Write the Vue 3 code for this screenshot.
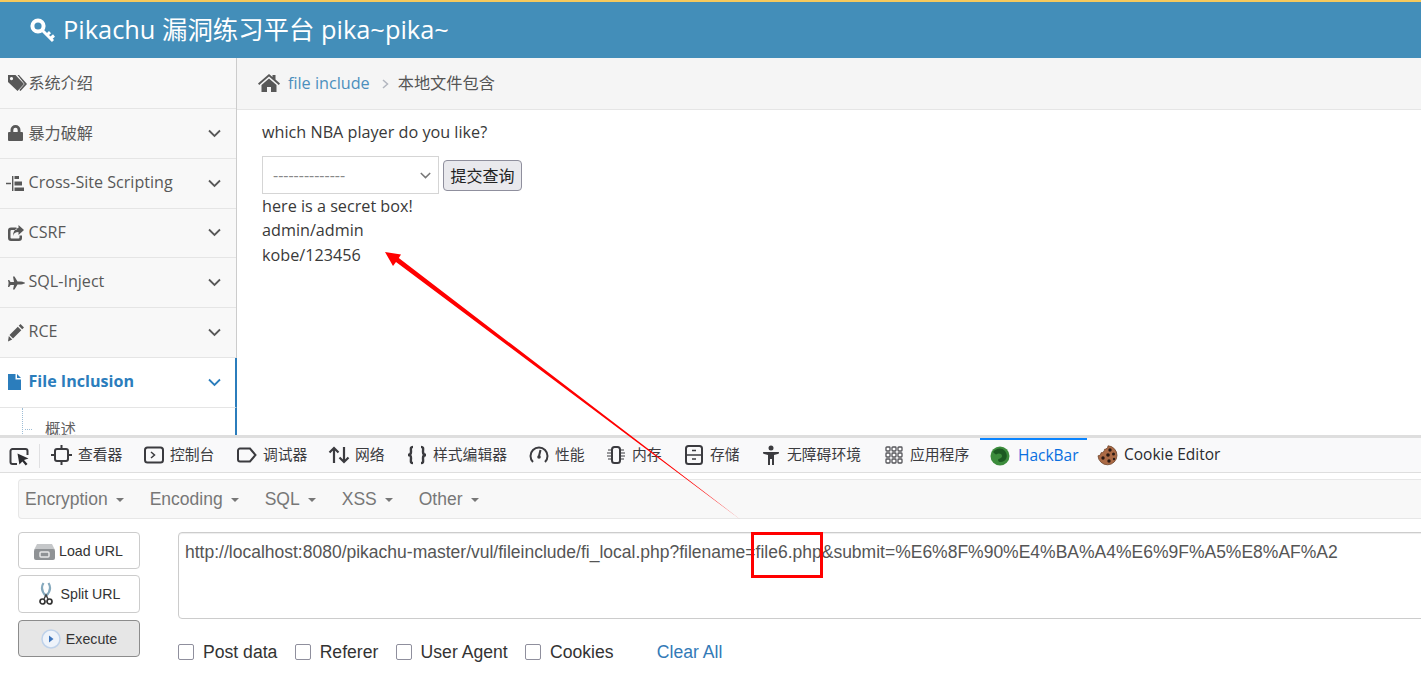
<script setup>
const chevron = 'M1 1.5 L6.5 7 L12 1.5'
const menu = [
  { label: '系统介绍', icon: 'M0 0h7.500L16 9l-6.500 7L0 7zM3.500 2a1.600 1.600 0 1 0 .01 0zM9.500 0h1.500l8 9-6.500 7-1.200-1 5.300-6z', w: 19, arrow: false },
  { label: '暴力破解', icon: 'M2.500 7V5a5 5 0 0 1 10 0V7H14a1 1 0 0 1 1 1v7a1 1 0 0 1-1 1H1a1 1 0 0 1-1-1V8a1 1 0 0 1 1-1zM5.300 7h4.400V5a2.200 2.200 0 0 0-4.400 0z', w: 15, arrow: true },
  { label: 'Cross-Site Scripting', icon: 'M-2 7.800h5v1.400h-5zM4 1h1.400v15H4zM6.500 1H11v3H6.500zM6.500 6.500H14v4H6.500zM6.500 12.500H16V16H6.500z', w: 17, arrow: true },
  { label: 'CSRF', icon: 'M3 2.500h5.500v2.500H3.500a1 1 0 0 0-1 1v6.500a1 1 0 0 0 1 1h7a1 1 0 0 0 1-1V10.500H14V13a3 3 0 0 1-3 3H3a3 3 0 0 1-3-3V5.500a3 3 0 0 1 3-3zM10.500 0L16 5l-5.500 5V7c-3 0-5 1.500-5.500 4C5 6.500 7.500 3.500 10.500 3z', w: 16, arrow: true },
  { label: 'SQL-Inject', icon: 'M0 5h1.200l1.300 2H6L5 1.500h1.500L9.500 6.500H13c2 .3 4 1 4 1.500s-2 1.200-4 1.500H9.500L6.500 14.500H5L6 10H2.500L1.200 12H0l.6-4z', w: 17, arrow: true },
  { label: 'RCE', icon: 'M12.500-1l3.500 3.500-1.800 1.800-3.500-3.500zM9.800 1.700l3.500 3.500-8.300 8.300-3.500-3.500zM.8 11l3.400 3.400L0 16.500z', w: 16, arrow: true },
  { label: 'File Inclusion', icon: 'M0 0h7.500v5.500H13V16H0zM9 0l4 4H9z', w: 13, arrow: true, active: true }
]
const tools = [
  { label: '查看器', w: 92 },
  { label: '控制台', w: 93 },
  { label: '调试器', w: 92 },
  { label: '网络', w: 78 },
  { label: '样式编辑器', w: 122 },
  { label: '性能', w: 77 },
  { label: '内存', w: 78 },
  { label: '存储', w: 77 },
  { label: '无障碍环境', w: 123 },
  { label: '应用程序', w: 97 }
]
const bars = ['Encryption', 'Encoding', 'SQL', 'XSS', 'Other']
const checks = ['Post data', 'Referer', 'User Agent', 'Cookies']
</script>

<template>
  <div class="page">
    <header class="top">
      <svg class="key" width="26" height="25" viewBox="0 0 26 25">
        <circle cx="8" cy="8" r="5.600" fill="none" stroke="#fff" stroke-width="4" />
        <path d="M11.500 11.500L23 23M17 17l3-2.800M20.500 20.500l3.500-3" fill="none" stroke="#fff" stroke-width="3" />
      </svg>
      <span class="brand">Pikachu 漏洞练习平台 pika~pika~</span>
    </header>

    <div class="middle">
      <aside class="side">
        <div v-for="item in menu" :key="item.label" class="row" :class="{ on: item.active }">
          <span class="ico">
            <svg :width="item.w" height="16" :viewBox="`0 0 ${item.w} 16`"><path :d="item.icon" fill-rule="evenodd" fill="currentColor" /></svg>
          </span>
          <span class="lab">{{ item.label }}</span>
          <svg v-if="item.arrow" class="chev" width="13" height="9" viewBox="0 0 13 9"><path :d="chevron" fill="none" stroke="currentColor" stroke-width="1.800" /></svg>
        </div>
        <div class="sub">
          <span class="dots"></span>
          <span class="dash"></span>
          <span class="subt">概述</span>
        </div>
      </aside>

      <main class="main">
        <div class="crumb">
          <svg width="22" height="18" viewBox="0 0 22 18"><path d="M0 9.500L11 0l3.500 3V1h3v4.600L22 9.500l-1.200 1.400L11 2.500 1.200 10.900zM3.500 11L11 4.500 18.500 11v7h-5.500v-5H9v5H3.500z" fill="#585858" /></svg>
          <a class="link">file include</a>
          <svg class="sep" width="7" height="10" viewBox="0 0 7 10"><path d="M1 1l4.500 4L1 9" fill="none" stroke="#b2b6bf" stroke-width="1.500" /></svg>
          <span class="here">本地文件包含</span>
        </div>
        <div class="body">
          <p class="ask">which NBA player do you like?</p>
          <div class="form">
            <div class="sel">
              <span>--------------</span>
              <svg width="11" height="7" viewBox="0 0 11 7"><path d="M.8 1l4.700 4.600L10.200 1" fill="none" stroke="#777" stroke-width="1.500" /></svg>
            </div>
            <button class="go">提交查询</button>
          </div>
          <p class="line">here is a secret box!</p>
          <p class="line">admin/admin</p>
          <p class="line">kobe/123456</p>
        </div>
      </main>
    </div>

    <section class="dev">
      <div class="tabs">
        <span class="pick">
          <svg width="21" height="19" viewBox="0 0 21 19">
            <path d="M8 17H3.500A2 2 0 0 1 1.500 15V4A2 2 0 0 1 3.500 2h13a2 2 0 0 1 2 2v4" fill="none" stroke="#3b3b3f" stroke-width="2" />
            <path d="M8.500 6.500l11 5-4.500 1.500 3.500 4-1.800 1.500-3.300-4-3 3z" fill="#2b2b2f" />
          </svg>
        </span>
        <span class="vr"></span>
        <div v-for="(t, i) in tools" :key="t.label" class="tool" :style="{ width: t.w + 'px' }">
          <svg width="22" height="20" viewBox="0 0 22 20" fill="none" stroke="#3b3b3f" stroke-width="2">
            <g v-if="i === 0"><rect x="4" y="4" width="13" height="12" rx="2" /><path d="M10.500 0v4M10.500 16v4M0 10h4M17 10h4" /></g>
            <g v-else-if="i === 1"><rect x="2" y="2.500" width="18" height="15" rx="2.500" /><path d="M8 7l3.500 3L8 13" stroke-width="1.500" /></g>
            <path v-else-if="i === 2" d="M4 3.500h10l5.500 6.500-5.500 6.500H4a2 2 0 0 1-2-2v-9a2 2 0 0 1 2-2z" />
            <g v-else-if="i === 3" stroke-width="2.200"><path d="M6 18V3M1.500 7.500L6 3l4.500 4.500M16 2v15M11.500 12.500L16 17l4.500-4.500" /></g>
            <g v-else-if="i === 4" stroke-width="2.400"><path d="M7 2C4 2 5 4 5 7c0 2-1 3-3 3 2 0 3 1 3 3 0 3-1 5 2 5M15 2c3 0 2 2 2 5 0 2 1 3 3 3-2 0-3 1-3 3 0 3 1 5-2 5" /></g>
            <g v-else-if="i === 5"><path d="M5 17A8.500 8.500 0 1 1 17 17" /><path d="M11 11l1.500-6" /><circle cx="11" cy="12" r="1.800" fill="#3b3b3f" stroke="none" /></g>
            <g v-else-if="i === 6" stroke-width="1.600"><rect x="7" y="2" width="8" height="16" rx="2.500" stroke-width="2" /><path d="M3 5h4M2 8h5M2 11h5M3 14h4M15 5h4M15 8h5M15 11h5M15 14h4" stroke-width="1.200" /></g>
            <g v-else-if="i === 7"><rect x="3" y="1" width="16" height="18" rx="2.500" /><path d="M3 10h16M9 5.500h4M9 14h4" stroke-width="1.500" /></g>
            <g v-else-if="i === 8"><circle cx="11" cy="3" r="2.500" fill="#3b3b3f" stroke="none" /><path d="M3 7h16l-.3 1.800L14 10v10h-2v-6h-2v6H8V10L3.300 8.800z" fill="#3b3b3f" stroke="none" /></g>
            <g v-else fill="#fff" stroke="#55555a" stroke-width="1.300"><rect x="3" y="2" width="4" height="4" rx=".8" /><rect x="9" y="2" width="4" height="4" rx=".8" /><rect x="15" y="2" width="4" height="4" rx=".8" /><rect x="3" y="8" width="4" height="4" rx=".8" /><rect x="9" y="8" width="4" height="4" rx=".8" /><rect x="15" y="8" width="4" height="4" rx=".8" /><rect x="3" y="14" width="4" height="4" rx=".8" /><rect x="9" y="14" width="4" height="4" rx=".8" /><rect x="15" y="14" width="4" height="4" rx=".8" /></g>
          </svg>
          <span class="tl">{{ t.label }}</span>
        </div>
        <div class="tool hack">
          <svg width="20" height="20" viewBox="0 0 20 20"><circle cx="10" cy="10" r="9.500" fill="#3c8c3c" /><path d="M3 6c3-4 9-5 12-1s2 8-1 10-6 1-6-1 4-1 4-4-4-3-5-2-2 0-4-2z" fill="#1c5a22" /></svg>
          <span>HackBar</span>
        </div>
        <div class="tool cookie">
          <svg width="21" height="21" viewBox="0 0 21 21"><path d="M11 .8a9.500 9.500 0 1 1-10 10c1.500 0 3-1 3-3 2 0 3.500-1.500 3.500-3.500 2 0 3.500-1.500 3.500-3.500z" fill="#ab6a45" stroke="#6d452c" stroke-width=".8" /><circle cx="13" cy="5" r="1.700" fill="#2b1a14" /><circle cx="16.500" cy="9" r="1.500" fill="#2b1a14" /><circle cx="11" cy="10" r="1.800" fill="#2b1a14" /><circle cx="6" cy="13" r="1.700" fill="#2b1a14" /><circle cx="12" cy="16" r="1.700" fill="#2b1a14" /><circle cx="17" cy="14" r="1.200" fill="#2b1a14" /></svg>
          <span>Cookie Editor</span>
        </div>
      </div>

      <div class="nav">
        <span v-for="b in bars" :key="b" class="drop">{{ b }}<i class="caret"></i></span>
      </div>

      <div class="work">
        <div class="btns">
          <button class="bt load">
            <svg width="23" height="20" viewBox="0 0 23 20"><path d="M4 3h15l3 6H1z" fill="#c5c7c9" /><rect x="1" y="8" width="21" height="11" rx="2" fill="#8f9295" /><rect x="7" y="11" width="9" height="5" rx="1" fill="none" stroke="#e8e8e8" stroke-width="1.500" /></svg>
            Load URL
          </button>
          <button class="bt split">
            <svg width="14" height="24" viewBox="0 0 14 24"><path d="M4.500 1C2 5 3 10 7 14M9.500 1C12 5 11 10 7 14" fill="none" stroke="#85a9bd" stroke-width="2.200" /><circle cx="3.500" cy="19.500" r="2.500" fill="none" stroke="#333" stroke-width="1.700" /><circle cx="10.500" cy="19.500" r="2.500" fill="none" stroke="#333" stroke-width="1.700" /><path d="M5 17l2-4 2 4" fill="none" stroke="#444" stroke-width="1.500" /></svg>
            Split URL
          </button>
          <button class="bt exec">
            <svg width="20" height="20" viewBox="0 0 20 20"><circle cx="10" cy="10" r="9" fill="#eef3fa" stroke="#bfd2ea" stroke-width="1.500" /><path d="M8 6.500l4.500 3.500L8 13.500z" fill="#3f76bd" /></svg>
            Execute
          </button>
        </div>
        <div class="right">
          <div class="url">http://localhost:8080/pikachu-master/vul/fileinclude/fi_local.php?filename=file6.php&amp;submit=%E6%8F%90%E4%BA%A4%E6%9F%A5%E8%AF%A2</div>
          <div class="opts">
            <label v-for="c in checks" :key="c" class="chk"><span class="box"></span>{{ c }}</label>
            <a class="clear">Clear All</a>
          </div>
        </div>
      </div>
    </section>

    <svg class="mark" width="1421" height="697" viewBox="0 0 1421 697">
      <path d="M385 252L401 254.500 398.800 258 741 520 396 262 393 266z" fill="#f00" />
    </svg>
    <div class="redbox"></div>
  </div>
</template>

<style>
html, body { margin: 0; padding: 0; background: #fff; overflow: hidden; }
</style>

<style scoped>
.page {
  position: relative;
  width: 1421px;
  height: 697px;
  overflow: hidden;
  display: flex;
  flex-direction: column;
  font-family: "Open Sans", "Noto Sans CJK SC", sans-serif;
  color: #393939;
}
.top {
  flex: none;
  height: 56px;
  border-top: 2px solid #f6c95c;
  background: #438eb9;
  display: flex;
  align-items: center;
  padding-left: 30px;
  color: #fff;
}
.key { margin-right: 7px; margin-top: 1px; }
.brand { font-size: 25.400px; position: relative; top: -2px; }
.middle { flex: none; height: 377px; display: flex; overflow: hidden; }
.side {
  flex: none;
  width: 236px;
  border-right: 1px solid #ccc;
  background: #f8f8f8;
  display: flex;
  flex-direction: column;
}
.row {
  flex: none;
  height: 49.85px;
  box-sizing: border-box;
  border-bottom: 1px solid #e5e5e5;
  display: flex;
  align-items: center;
  padding-left: 8px;
  color: #585858;
  font-size: 16.100px;
}
.row:first-child { height: 50.85px; }
.ico { display: flex; flex: none; width: 20.500px; }
.ico svg { overflow: visible; }
.lab { flex: 1; position: relative; top: -1.400px; }
.chev { margin-right: 15px; color: #585858; }
.row.on { background: #fff; color: #2b7dbc; font-weight: 700; margin-right: -1px; border-right: 2px solid #2b7dbc; }
.row.on .chev { color: #2b7dbc; margin-right: 14px; }
.sub { flex: 1; position: relative; background: #fff; margin-right: -1px; border-right: 2px solid #2b7dbc; color: #616161; font-size: 15.500px; }
.subt { position: absolute; left: 45px; top: 9px; }
.dots { position: absolute; left: 22px; top: 0; height: 30px; border-left: 1px dotted #9dbdd6; }
.dash { position: absolute; left: 25px; top: 21px; width: 7px; border-top: 1px dotted #9dbdd6; }
.main { flex: 1; display: flex; flex-direction: column; min-width: 0; background: #fff; }
.crumb {
  flex: none;
  height: 52px;
  padding: 0 0 2px 21px;
  box-sizing: border-box;
  background: #f5f5f5;
  border-bottom: 1px solid #e5e5e5;
  display: flex;
  align-items: center;
  font-size: 16.200px;
}
.link { color: #4c8fbd; margin-left: 8px; }
.sep { margin: 2px 9px 0 12px; }
.here { color: #555; position: relative; top: -1px; }
.body { padding: 10px 0 0 25px; font-size: 16.200px; color: #393939; }
.ask { margin: 0; line-height: 24px; }
.form { display: flex; align-items: center; gap: 4px; margin-top: 12px; height: 38px; }
.sel {
  width: 177px;
  height: 38px;
  box-sizing: border-box;
  border: 1px solid #d5d5d5;
  display: flex;
  align-items: center;
  justify-content: space-between;
  padding: 0 7px 0 10px;
  color: #888;
  font-size: 16px;
}
.go {
  width: 79px;
  height: 31px;
  padding: 0;
  background: #e9e9ed;
  border: 1px solid #8f8f9d;
  border-radius: 4px;
  font: 16px "Noto Sans CJK SC", sans-serif;
  color: #222;
}
.line { margin: 0; line-height: 24.300px; }
.dev { flex: 1; display: flex; flex-direction: column; border-top: 3px solid #dedede; background: #fff; }
.tabs {
  flex: none;
  height: 34px;
  background: #f9f9fa;
  border-bottom: 1px solid #dedede;
  display: flex;
  align-items: center;
  font-size: 14.800px;
  color: #3b3b3f;
  position: relative;
  padding-left: 9px;
}
.pick { display: flex; width: 21px; margin-top: 2px; }
.vr { width: 1px; height: 24px; background: #e0e0e2; margin: 2px 11px 0 9px; }
.tool { display: flex; align-items: center; flex: none; height: 100%; }
.tl { margin-left: 5px; white-space: nowrap; position: relative; top: -2px; }
.tool svg { flex: none; }
.hack {
  width: 107px;
  box-sizing: border-box;
  padding-left: 10px;
  gap: 8px;
  color: #0a6fe0;
  font-size: 15.500px;
  border-top: 2px solid #0a84ff;
}
.hack span, .cookie span { position: relative; top: -1px; }
.cookie { margin-left: 10px; gap: 6px; font-size: 15.500px; color: #2a2a2e; }
.nav {
  flex: none;
  margin: 6px 0 0 18px;
  height: 38px;
  border: 1px solid #e7e7e7;
  border-right: 0;
  border-radius: 4px 0 0 4px;
  background: #f8f8f8;
  display: flex;
  align-items: center;
  padding-left: 6px;
  gap: 26px;
  font: 17.500px "Liberation Sans", sans-serif;
  color: #777;
}
.drop { display: flex; align-items: center; }
.caret {
  margin-left: 8px;
  margin-top: 2px;
  border-top: 4px solid #777;
  border-left: 4.500px solid transparent;
  border-right: 4.500px solid transparent;
}
.work { flex: 1; display: flex; margin-top: 13px; padding-left: 18px; font-family: "Liberation Sans", sans-serif; }
.btns { width: 122px; flex: none; display: flex; flex-direction: column; gap: 6px; }
.bt {
  box-sizing: border-box;
  width: 122px;
  height: 38px;
  padding: 0;
  background: #fff;
  border: 1px solid #ccc;
  border-radius: 4px;
  display: flex;
  align-items: center;
  justify-content: center;
  font: 14.200px "Liberation Sans", sans-serif;
  color: #333;
  gap: 3px;
}
.load { height: 37px; padding-right: 2px; }
.split { gap: 8px; padding-left: 1px; }
.exec { height: 37px; margin-top: 1px; background: #e6e6e6; border-color: #8c8c8c; gap: 5px; }
.right { margin-left: 38px; flex: 1; min-width: 0; }
.url {
  width: 1300px;
  height: 87px;
  box-sizing: border-box;
  border: 1px solid #ccc;
  border-radius: 4px;
  padding: 8px 6px;
  font-size: 17.500px;
  line-height: 22px;
  color: #555;
  white-space: nowrap;
  box-shadow: inset 0 1px 1px rgba(0,0,0,.075);
}
.opts { display: flex; align-items: center; margin-top: 21px; font-size: 17.600px; color: #333; height: 24px; }
.chk { display: flex; align-items: center; margin-right: 17.300px; }
.box {
  width: 14px;
  height: 14px;
  border: 1px solid #8f8f9d;
  border-radius: 2px;
  margin-right: 9px;
  background: #fff;
}
.clear { color: #337ab7; margin-left: 26px; }
.mark { position: absolute; left: 0; top: 0; pointer-events: none; }
.redbox {
  position: absolute;
  left: 751px;
  top: 532px;
  width: 66px;
  height: 40px;
  border: 3px solid #f00;
}
</style>
